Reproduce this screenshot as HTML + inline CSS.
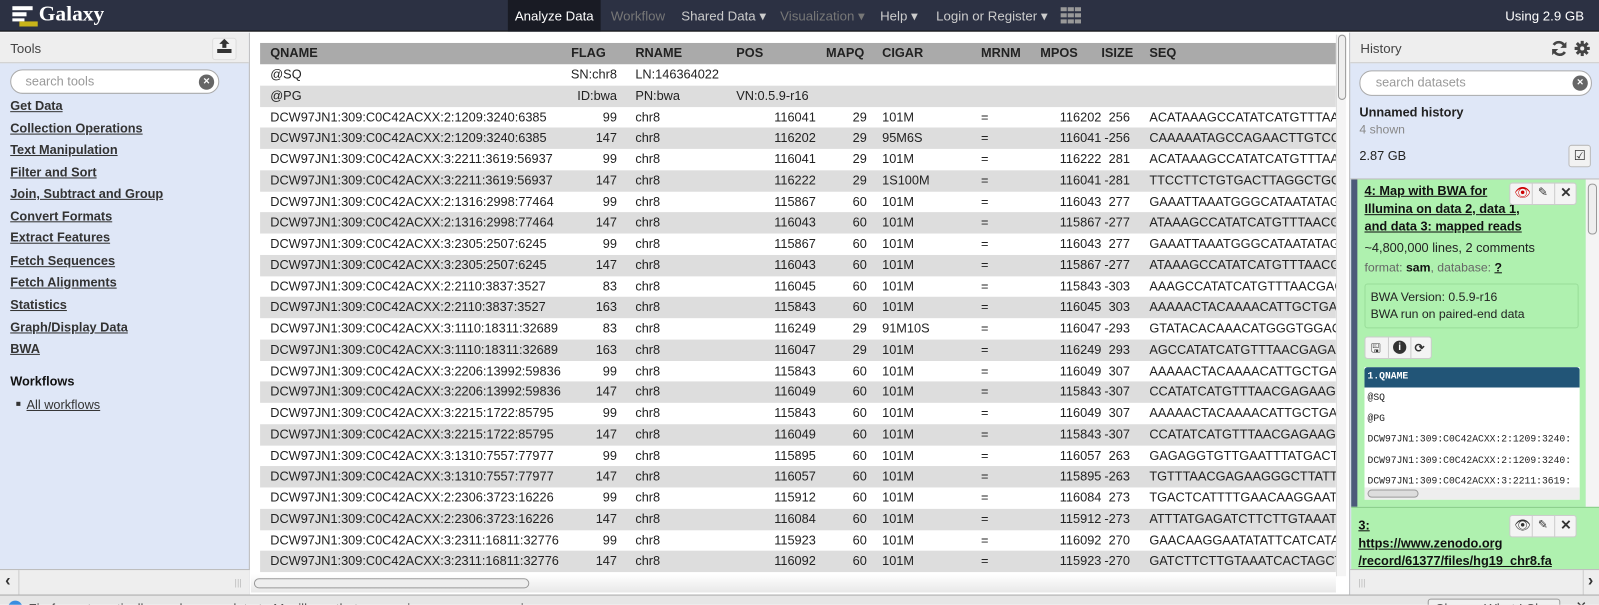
<!DOCTYPE html>
<html><head><meta charset="utf-8"><style>
*{box-sizing:border-box;margin:0;padding:0}
body{width:1599px;height:605px;overflow:hidden;font-family:"Liberation Sans",sans-serif;font-size:12.5px;color:#333;background:#fff;position:relative}
#w{position:absolute;left:0;top:0;width:1568px;height:593px;transform:scale(1.0198);transform-origin:0 0;overflow:hidden}
.nav{position:absolute;left:0;top:0;width:1568px;height:31px;background:#2c3143;border-bottom:1px solid #111}
.nav .it{position:absolute;top:0;height:31px;line-height:31px;font-size:13px;color:#ccc}
.logo{position:absolute;left:38px;top:1px;font-family:"Liberation Serif",serif;font-weight:bold;font-size:21px;color:#fff}
.left{position:absolute;left:0;top:32px;width:245px;height:551px;background:#dfe7f7;border-right:1px solid #bbb}
.lhead{height:30px;background:#eee;border-bottom:1px solid #ccc;padding:8px 10px;font-size:13px;color:#444}
.left a{position:absolute;left:10px;font-weight:bold;color:#333;text-decoration:underline;font-size:12.5px}
.center{position:absolute;left:246px;top:32px;width:1077px;height:551px;background:#fff;overflow:hidden}
.tbl{position:absolute;left:9px;top:10px;width:1055px;height:521px;overflow:hidden}
.r{position:absolute;left:0;width:1055px;height:20.75px;line-height:20.75px;white-space:nowrap;font-size:12.5px;color:#222}
.r.g{background:#ddd}
.r.h{background:#aaa;font-weight:bold;height:21px;top:0}
.r span{position:absolute;top:0}
.c1{left:10px}.c2{left:300px;width:50px;text-align:right}.c3{left:368px}.c4{left:465px;width:80px;text-align:right}.c5{left:555px;width:40px;text-align:right}.c6{left:610px}.c7{left:707px}.c8{left:741px;width:84px;text-align:right}.c9{left:808px;width:45px;text-align:right}.c10{left:872px}
.h span{text-align:left!important;width:auto!important}
.right{position:absolute;left:1323px;top:32px;width:245px;height:551px;background:#dfe7f7;border-left:1px solid #bbb}
.mono{font-family:"Liberation Mono",monospace;font-size:9.5px;color:#222}
.btn{position:absolute;width:22px;height:22px;border:1px solid #bbb;background:#f2f2f2;border-radius:3px;text-align:center;line-height:20px;font-size:13px;color:#333}
.foot{position:absolute;left:0;top:583px;width:1568px;height:22px;background:#e6e6e6;border-top:1px solid #aaa}
</style></head><body><div id="w">
<div class="nav">
 <svg style="position:absolute;left:12px;top:6px" width="26" height="20"><rect x="0" y="0" width="20" height="4" fill="#fff"/><rect x="0" y="6" width="14" height="4" fill="#fff"/><rect x="0" y="12" width="12" height="3" fill="#fff"/><rect x="7" y="15" width="18" height="5" fill="#c8b41a"/></svg>
 <div class="logo">Galaxy</div>
 <div class="it" style="left:498px;width:91px;background:#191b24;color:#fff;text-align:center">Analyze Data</div>
 <div class="it" style="left:599px;color:#777">Workflow</div>
 <div class="it" style="left:668px">Shared Data ▾</div>
 <div class="it" style="left:765px;color:#777">Visualization ▾</div>
 <div class="it" style="left:863px">Help ▾</div>
 <div class="it" style="left:918px">Login or Register ▾</div>
 <svg style="position:absolute;left:1040px;top:7px" width="21" height="17" fill="#999"><rect x="0" y="0" width="6" height="4"/><rect x="7" y="0" width="6" height="4"/><rect x="14" y="0" width="6" height="4"/><rect x="0" y="6" width="6" height="4"/><rect x="7" y="6" width="6" height="4"/><rect x="14" y="6" width="6" height="4"/><rect x="0" y="12" width="6" height="4"/><rect x="7" y="12" width="6" height="4"/><rect x="14" y="12" width="6" height="4"/></svg>
 <div class="it" style="left:1476px;color:#fff">Using 2.9 GB</div>
</div>

<div class="left">
 <div class="lhead">Tools</div>
 <div class="btn" style="left:208px;top:5px;width:24px;border-color:#ddd"><svg width="16" height="14" viewBox="0 0 16 14"><path d="M8 0 3 5h3v4h4V5h3z M1 10h14v4H1z" fill="#333"/></svg></div>
 <div style="position:absolute;left:10px;top:36px;width:205px;height:24px;border:1px solid #aaa;border-radius:12px;background:#fff;padding-left:14px;line-height:22px;color:#999;font-size:12.5px">search tools<span style="position:absolute;right:4px;top:4px;width:15px;height:15px;border-radius:50%;background:#666;color:#fff;font-size:11px;line-height:15px;text-align:center;font-weight:bold">×</span></div>
 <a style="top:65px">Get Data</a>
 <a style="top:87px">Collection Operations</a>
 <a style="top:108px">Text Manipulation</a>
 <a style="top:130px">Filter and Sort</a>
 <a style="top:151px">Join, Subtract and Group</a>
 <a style="top:173px">Convert Formats</a>
 <a style="top:194px">Extract Features</a>
 <a style="top:217px">Fetch Sequences</a>
 <a style="top:238px">Fetch Alignments</a>
 <a style="top:260px">Statistics</a>
 <a style="top:282px">Graph/Display Data</a>
 <a style="top:303px">BWA</a>
 <div style="position:absolute;left:10px;top:335px;font-weight:bold;color:#111">Workflows</div>
 <div style="position:absolute;left:16px;top:362px;width:4px;height:4px;background:#333"></div>
 <a style="top:358px;left:26px;font-weight:normal">All workflows</a>
 <div style="position:absolute;left:0;top:526px;width:245px;height:25px;background:#eee;border-top:1px solid #bbb"><span style="position:absolute;left:5px;top:2px;font-size:16px;font-weight:bold">‹</span><span style="position:absolute;left:18px;top:0;height:25px;border-left:1px solid #ccc"></span><span style="position:absolute;left:230px;top:7px;color:#bbb;font-size:9px">|||</span></div>
</div>

<div class="center">
<div class="tbl">
<div class="r h"><span class="c1">QNAME</span><span style="left:305px">FLAG</span><span class="c3">RNAME</span><span style="left:467px">POS</span><span style="left:555px">MAPQ</span><span class="c6">CIGAR</span><span class="c7">MRNM</span><span style="left:765px">MPOS</span><span style="left:825px">ISIZE</span><span class="c10">SEQ</span></div>
<div class="r" style="top:21px"><span class="c1">@SQ</span><span class="c2">SN:chr8</span><span class="c3">LN:146364022</span></div>
<div class="r g" style="top:41.75px"><span class="c1">@PG</span><span class="c2">ID:bwa</span><span class="c3">PN:bwa</span><span style="left:467px">VN:0.5.9-r16</span></div>
<div class="r" style="top:62.5px"><span class="c1">DCW97JN1:309:C0C42ACXX:2:1209:3240:6385</span><span class="c2">99</span><span class="c3">chr8</span><span class="c4">116041</span><span class="c5">29</span><span class="c6">101M</span><span class="c7">=</span><span class="c8">116202</span><span class="c9">256</span><span class="c10">ACATAAAGCCATATCATGTTTAACGAG</span></div>
<div class="r g" style="top:83.25px"><span class="c1">DCW97JN1:309:C0C42ACXX:2:1209:3240:6385</span><span class="c2">147</span><span class="c3">chr8</span><span class="c4">116202</span><span class="c5">29</span><span class="c6">95M6S</span><span class="c7">=</span><span class="c8">116041</span><span class="c9">-256</span><span class="c10">CAAAAATAGCCAGAACTTGTCCAGG</span></div>
<div class="r" style="top:104px"><span class="c1">DCW97JN1:309:C0C42ACXX:3:2211:3619:56937</span><span class="c2">99</span><span class="c3">chr8</span><span class="c4">116041</span><span class="c5">29</span><span class="c6">101M</span><span class="c7">=</span><span class="c8">116222</span><span class="c9">281</span><span class="c10">ACATAAAGCCATATCATGTTTAACGAG</span></div>
<div class="r g" style="top:124.75px"><span class="c1">DCW97JN1:309:C0C42ACXX:3:2211:3619:56937</span><span class="c2">147</span><span class="c3">chr8</span><span class="c4">116222</span><span class="c5">29</span><span class="c6">1S100M</span><span class="c7">=</span><span class="c8">116041</span><span class="c9">-281</span><span class="c10">TTCCTTCTGTGACTTAGGCTGGGAA</span></div>
<div class="r" style="top:145.5px"><span class="c1">DCW97JN1:309:C0C42ACXX:2:1316:2998:77464</span><span class="c2">99</span><span class="c3">chr8</span><span class="c4">115867</span><span class="c5">60</span><span class="c6">101M</span><span class="c7">=</span><span class="c8">116043</span><span class="c9">277</span><span class="c10">GAAATTAAATGGGCATAATATAGATGA</span></div>
<div class="r g" style="top:166.25px"><span class="c1">DCW97JN1:309:C0C42ACXX:2:1316:2998:77464</span><span class="c2">147</span><span class="c3">chr8</span><span class="c4">116043</span><span class="c5">60</span><span class="c6">101M</span><span class="c7">=</span><span class="c8">115867</span><span class="c9">-277</span><span class="c10">ATAAAGCCATATCATGTTTAACGAGA</span></div>
<div class="r" style="top:187px"><span class="c1">DCW97JN1:309:C0C42ACXX:3:2305:2507:6245</span><span class="c2">99</span><span class="c3">chr8</span><span class="c4">115867</span><span class="c5">60</span><span class="c6">101M</span><span class="c7">=</span><span class="c8">116043</span><span class="c9">277</span><span class="c10">GAAATTAAATGGGCATAATATAGATGA</span></div>
<div class="r g" style="top:207.75px"><span class="c1">DCW97JN1:309:C0C42ACXX:3:2305:2507:6245</span><span class="c2">147</span><span class="c3">chr8</span><span class="c4">116043</span><span class="c5">60</span><span class="c6">101M</span><span class="c7">=</span><span class="c8">115867</span><span class="c9">-277</span><span class="c10">ATAAAGCCATATCATGTTTAACGAGA</span></div>
<div class="r" style="top:228.5px"><span class="c1">DCW97JN1:309:C0C42ACXX:2:2110:3837:3527</span><span class="c2">83</span><span class="c3">chr8</span><span class="c4">116045</span><span class="c5">60</span><span class="c6">101M</span><span class="c7">=</span><span class="c8">115843</span><span class="c9">-303</span><span class="c10">AAAGCCATATCATGTTTAACGAGAAG</span></div>
<div class="r g" style="top:249.25px"><span class="c1">DCW97JN1:309:C0C42ACXX:2:2110:3837:3527</span><span class="c2">163</span><span class="c3">chr8</span><span class="c4">115843</span><span class="c5">60</span><span class="c6">101M</span><span class="c7">=</span><span class="c8">116045</span><span class="c9">303</span><span class="c10">AAAAACTACAAAACATTGCTGAAAG</span></div>
<div class="r" style="top:270px"><span class="c1">DCW97JN1:309:C0C42ACXX:3:1110:18311:32689</span><span class="c2">83</span><span class="c3">chr8</span><span class="c4">116249</span><span class="c5">29</span><span class="c6">91M10S</span><span class="c7">=</span><span class="c8">116047</span><span class="c9">-293</span><span class="c10">GTATACACAAACATGGGTGGACCAT</span></div>
<div class="r g" style="top:290.75px"><span class="c1">DCW97JN1:309:C0C42ACXX:3:1110:18311:32689</span><span class="c2">163</span><span class="c3">chr8</span><span class="c4">116047</span><span class="c5">29</span><span class="c6">101M</span><span class="c7">=</span><span class="c8">116249</span><span class="c9">293</span><span class="c10">AGCCATATCATGTTTAACGAGAAGGG</span></div>
<div class="r" style="top:311.5px"><span class="c1">DCW97JN1:309:C0C42ACXX:3:2206:13992:59836</span><span class="c2">99</span><span class="c3">chr8</span><span class="c4">115843</span><span class="c5">60</span><span class="c6">101M</span><span class="c7">=</span><span class="c8">116049</span><span class="c9">307</span><span class="c10">AAAAACTACAAAACATTGCTGAAAG</span></div>
<div class="r g" style="top:332.25px"><span class="c1">DCW97JN1:309:C0C42ACXX:3:2206:13992:59836</span><span class="c2">147</span><span class="c3">chr8</span><span class="c4">116049</span><span class="c5">60</span><span class="c6">101M</span><span class="c7">=</span><span class="c8">115843</span><span class="c9">-307</span><span class="c10">CCATATCATGTTTAACGAGAAGGGCT</span></div>
<div class="r" style="top:353px"><span class="c1">DCW97JN1:309:C0C42ACXX:3:2215:1722:85795</span><span class="c2">99</span><span class="c3">chr8</span><span class="c4">115843</span><span class="c5">60</span><span class="c6">101M</span><span class="c7">=</span><span class="c8">116049</span><span class="c9">307</span><span class="c10">AAAAACTACAAAACATTGCTGAAAG</span></div>
<div class="r g" style="top:373.75px"><span class="c1">DCW97JN1:309:C0C42ACXX:3:2215:1722:85795</span><span class="c2">147</span><span class="c3">chr8</span><span class="c4">116049</span><span class="c5">60</span><span class="c6">101M</span><span class="c7">=</span><span class="c8">115843</span><span class="c9">-307</span><span class="c10">CCATATCATGTTTAACGAGAAGGGCT</span></div>
<div class="r" style="top:394.5px"><span class="c1">DCW97JN1:309:C0C42ACXX:3:1310:7557:77977</span><span class="c2">99</span><span class="c3">chr8</span><span class="c4">115895</span><span class="c5">60</span><span class="c6">101M</span><span class="c7">=</span><span class="c8">116057</span><span class="c9">263</span><span class="c10">GAGAGGTGTTGAATTTATGACTCATT</span></div>
<div class="r g" style="top:415.25px"><span class="c1">DCW97JN1:309:C0C42ACXX:3:1310:7557:77977</span><span class="c2">147</span><span class="c3">chr8</span><span class="c4">116057</span><span class="c5">60</span><span class="c6">101M</span><span class="c7">=</span><span class="c8">115895</span><span class="c9">-263</span><span class="c10">TGTTTAACGAGAAGGGCTTATTGTCA</span></div>
<div class="r" style="top:436px"><span class="c1">DCW97JN1:309:C0C42ACXX:2:2306:3723:16226</span><span class="c2">99</span><span class="c3">chr8</span><span class="c4">115912</span><span class="c5">60</span><span class="c6">101M</span><span class="c7">=</span><span class="c8">116084</span><span class="c9">273</span><span class="c10">TGACTCATTTTGAACAAGGAATATAT</span></div>
<div class="r g" style="top:456.75px"><span class="c1">DCW97JN1:309:C0C42ACXX:2:2306:3723:16226</span><span class="c2">147</span><span class="c3">chr8</span><span class="c4">116084</span><span class="c5">60</span><span class="c6">101M</span><span class="c7">=</span><span class="c8">115912</span><span class="c9">-273</span><span class="c10">ATTTATGAGATCTTCTTGTAAATCAC</span></div>
<div class="r" style="top:477.5px"><span class="c1">DCW97JN1:309:C0C42ACXX:3:2311:16811:32776</span><span class="c2">99</span><span class="c3">chr8</span><span class="c4">115923</span><span class="c5">60</span><span class="c6">101M</span><span class="c7">=</span><span class="c8">116092</span><span class="c9">270</span><span class="c10">GAACAAGGAATATATTCATCATATAT</span></div>
<div class="r g" style="top:498.25px"><span class="c1">DCW97JN1:309:C0C42ACXX:3:2311:16811:32776</span><span class="c2">147</span><span class="c3">chr8</span><span class="c4">116092</span><span class="c5">60</span><span class="c6">101M</span><span class="c7">=</span><span class="c8">115923</span><span class="c9">-270</span><span class="c10">GATCTTCTTGTAAATCACTAGCTGTT</span></div>
<div class="r" style="top:519px"><span class="c1">DCW97JN1:309:C0C42ACXX:3:1306:15117:72446</span><span class="c2">99</span><span class="c3">chr8</span><span class="c4">116103</span><span class="c5">60</span><span class="c6">101M</span><span class="c7">=</span><span class="c8">115983</span><span class="c9">-277</span><span class="c10">ACTAGCTGTTTGGATTAGTGTGTTT</span></div>
</div>
<div style="position:absolute;left:1064px;top:2px;width:10px;height:531px;background:#f4f4f4;border-left:1px solid #ddd"><div style="position:absolute;left:1px;top:0;width:8px;height:64px;border:1px solid #999;border-radius:4px;background:#eee"></div></div>
<div style="position:absolute;left:0;top:531px;width:1064px;height:18px;background:linear-gradient(#fff,#e8e8e8)"><div style="position:absolute;left:3px;top:4px;width:270px;height:10px;border:1px solid #999;border-radius:5px;background:#eee"></div></div>
</div>

<div class="right">
 <div class="lhead" style="color:#444">History</div>
 <svg style="position:absolute;left:197px;top:8px" width="16" height="15" viewBox="0 0 16 15"><path d="M13 5A6 6 0 0 0 2.5 4M3 10a6 6 0 0 0 10.5 1" stroke="#444" stroke-width="2.6" fill="none"/><path d="M15 1v6h-6zM1 14V8h6z" fill="#444"/></svg>
 <svg style="position:absolute;left:220px;top:8px" width="15" height="15" viewBox="0 0 15 15"><circle cx="7.5" cy="7.5" r="5" fill="#444"/><g stroke="#444" stroke-width="3"><path d="M7.5 0v15M0 7.5h15M2.2 2.2l10.6 10.6M12.8 2.2 2.2 12.8"/></g><circle cx="7.5" cy="7.5" r="2" fill="#eee"/></svg>
 <div style="position:absolute;left:9px;top:37px;width:228px;height:25px;border:1px solid #aaa;border-radius:12px;background:#fff;padding-left:15px;line-height:23px;color:#999">search datasets<span style="position:absolute;right:3px;top:4px;width:15px;height:15px;border-radius:50%;background:#666;color:#fff;font-size:11px;line-height:15px;text-align:center;font-weight:bold">×</span></div>
 <div style="position:absolute;left:9px;top:71px;font-weight:bold;color:#222">Unnamed history</div>
 <div style="position:absolute;left:9px;top:88px;color:#888;font-size:12px">4 shown</div>
 <div style="position:absolute;left:9px;top:114px;color:#222">2.87 GB</div>
 <div class="btn" style="left:214px;top:110px">☑</div>
 <div style="position:absolute;left:0;top:143px;width:245px;border-top:1px solid #bbb"></div>
 <div style="position:absolute;left:1px;top:144px;width:230px;height:321px;background:#aff1af;border-left:6px solid #4c5a7a">
  <div style="position:absolute;left:7px;top:3px;width:160px;font-weight:bold;text-decoration:underline;color:#111;line-height:17.5px">4: Map with BWA for Illumina on data 2, data 1, and data 3: mapped reads</div>
  <div style="position:absolute;left:149px;top:3px;width:66px;height:22px;border:1px solid #ccc;border-radius:3px;background:#f4f4f4"></div>
  <div style="position:absolute;left:154px;top:5px;color:#c00;font-size:13px">👁</div>
  <div style="position:absolute;left:171px;top:3px;height:22px;border-left:1px solid #ccc"></div>
  <div style="position:absolute;left:177px;top:5px;font-size:12px">✎</div>
  <div style="position:absolute;left:193px;top:3px;height:22px;border-left:1px solid #ccc"></div>
  <div style="position:absolute;left:199px;top:5px;font-weight:bold;font-size:13px">✕</div>
  <div style="position:absolute;left:7px;top:60px;color:#222">~4,800,000 lines, 2 comments</div>
  <div style="position:absolute;left:7px;top:79px;color:#666;font-size:12px">format: <b style="color:#111">sam</b>, database: <u style="color:#111;font-weight:bold">?</u></div>
  <div style="position:absolute;left:7px;top:102px;width:210px;height:44px;border:1px solid #9d9;border-radius:3px;padding:4px 5px;color:#222;font-size:12px;line-height:17px">BWA Version: 0.5.9-r16<br>BWA run on paired-end data</div>
  <div style="position:absolute;left:7px;top:154px;width:66px;height:22px;border:1px solid #ccc;border-radius:3px;background:#f4f4f4;font-size:12px;line-height:20px"><span style="position:absolute;left:5px">🖫</span><span style="position:absolute;left:22px;top:0;height:20px;border-left:1px solid #ccc"></span><span style="position:absolute;left:27px;top:3px;width:13px;height:13px;border-radius:50%;background:#333;color:#fff;font-size:10px;line-height:13px;text-align:center;font-weight:bold">i</span><span style="position:absolute;left:44px;top:0;height:20px;border-left:1px solid #ccc"></span><span style="position:absolute;left:48px;font-weight:bold">⟳</span></div>
  <div style="position:absolute;left:7px;top:184px;width:211px;height:130px;background:#fff;overflow:hidden">
   <div class="mono" style="height:20px;background:#225577;color:#fff;font-weight:bold;padding-left:3px;line-height:18px;border-radius:3px 3px 0 0">1.QNAME</div>
   <div class="mono" style="padding-left:3px;line-height:20.5px;white-space:nowrap">@SQ<br>@PG<br>DCW97JN1:309:C0C42ACXX:2:1209:3240:<br>DCW97JN1:309:C0C42ACXX:2:1209:3240:<br>DCW97JN1:309:C0C42ACXX:3:2211:3619:</div>
   <div style="position:absolute;left:0;top:118px;width:211px;height:12px;background:#eee"><div style="position:absolute;left:3px;top:2px;width:50px;height:8px;border:1px solid #999;border-radius:4px;background:#ddd"></div></div>
  </div>
 </div>
 <div style="position:absolute;left:231px;top:144px;width:13px;height:321px;background:#f4f4f4"><div style="position:absolute;left:2px;top:4px;width:9px;height:50px;border:1px solid #999;border-radius:4px;background:#eee"></div></div>
 <div style="position:absolute;left:1px;top:465px;width:244px;height:61px;background:#aff1af;border-top:1px solid #8c8">
  <div style="position:absolute;left:7px;top:9px;width:170px;font-weight:bold;text-decoration:underline;color:#111;line-height:17.5px">3:<br>https://www.zenodo.org<br>/record/61377/files/hg19_chr8.fa</div>
  <div style="position:absolute;left:155px;top:7px;width:66px;height:22px;border:1px solid #ccc;border-radius:3px;background:#f4f4f4"></div>
  <div style="position:absolute;left:160px;top:9px;font-size:13px">👁</div>
  <div style="position:absolute;left:177px;top:7px;height:22px;border-left:1px solid #ccc"></div>
  <div style="position:absolute;left:183px;top:9px;font-size:12px">✎</div>
  <div style="position:absolute;left:199px;top:7px;height:22px;border-left:1px solid #ccc"></div>
  <div style="position:absolute;left:205px;top:9px;font-weight:bold;font-size:13px">✕</div>
 </div>
 <div style="position:absolute;left:0;top:526px;width:245px;height:25px;background:#eee;border-top:1px solid #bbb"><span style="position:absolute;left:8px;top:7px;color:#bbb;font-size:9px">|||</span><span style="position:absolute;left:228px;top:0;height:25px;border-left:1px solid #ccc"></span><span style="position:absolute;left:233px;top:2px;font-size:16px;font-weight:bold">›</span></div>
</div>

<div class="foot">
 <span style="position:absolute;left:8px;top:5px;width:14px;height:14px;border-radius:50%;background:#3a8de0"></span>
 <span style="position:absolute;left:28px;top:5px;font-size:13px;color:#222;white-space:nowrap">Firefox automatically sends some data to Mozilla so that we can improve your experience.</span>
 <span style="position:absolute;left:1400px;top:3px;width:130px;height:22px;border:1px solid #999;border-radius:3px;background:#f0f0f0;font-size:13px;padding-left:6px;line-height:18px;color:#222;white-space:nowrap">Choose What I Share</span>
 <span style="position:absolute;left:1545px;top:3px;font-size:13px">✕</span>
</div>
</div></body></html>
